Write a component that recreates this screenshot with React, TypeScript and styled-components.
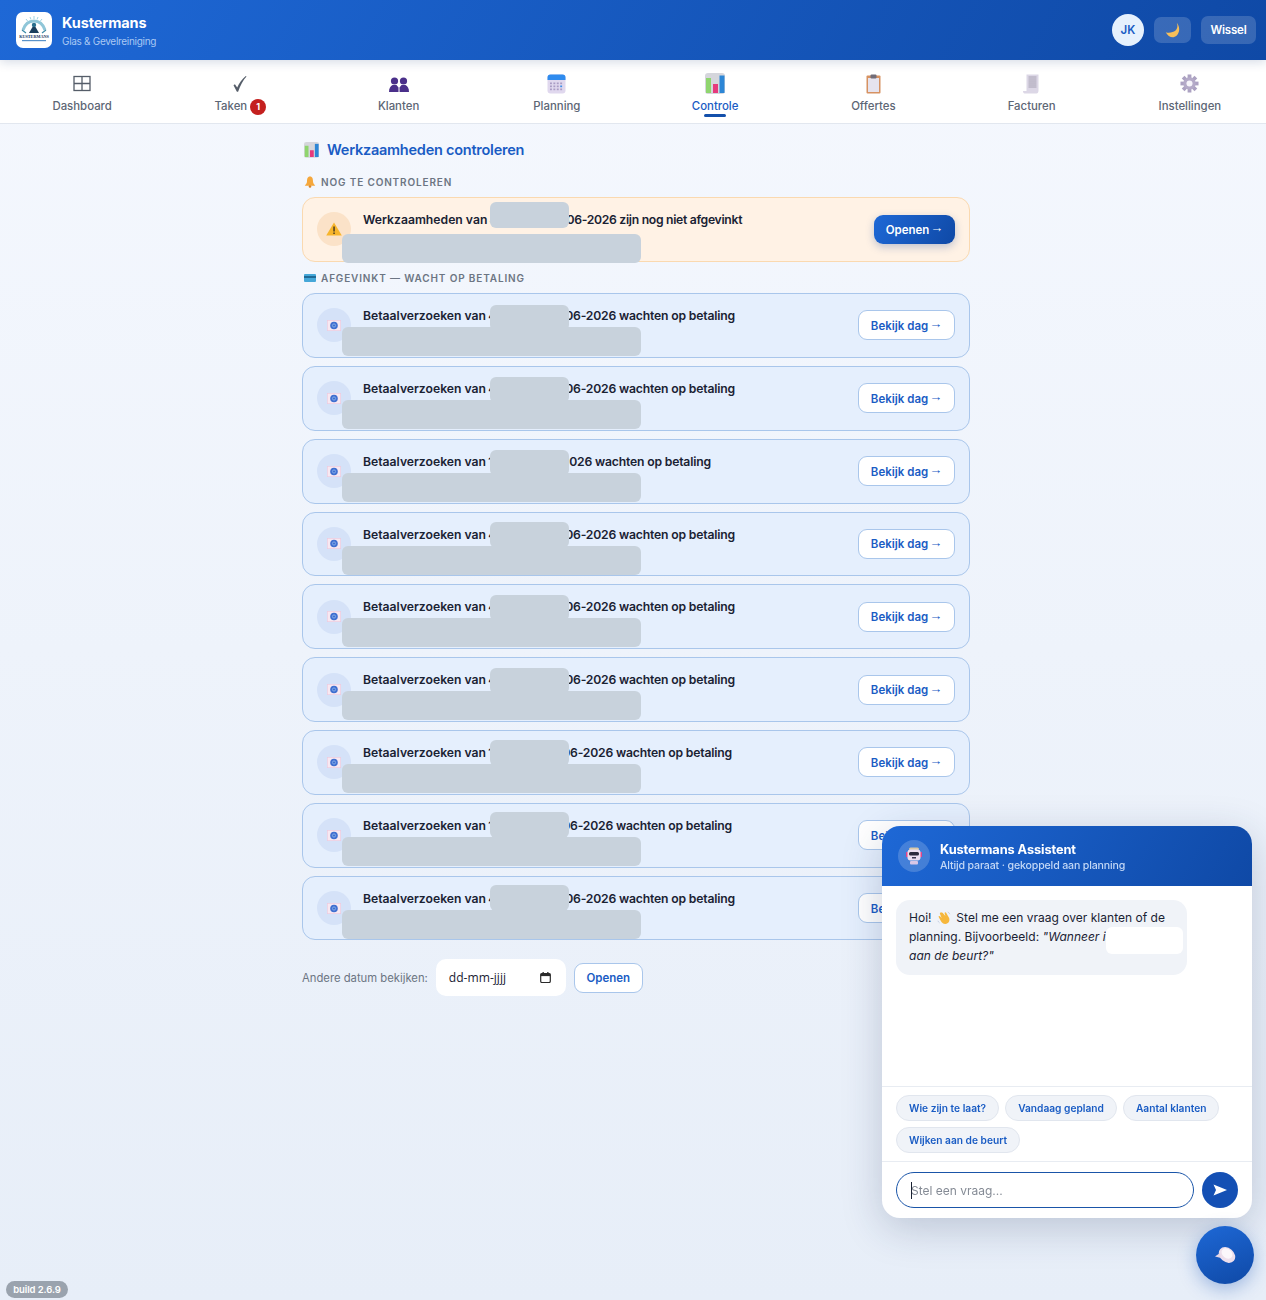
import React from "react";
import styled, {createGlobalStyle} from "styled-components";

const GlobalStyle = createGlobalStyle`
  html, body {
    margin: 0;
    padding: 0;
    min-height: 100%;
  }
  body {
    font-family: Inter, "Noto Sans", "Liberation Sans", sans-serif;
    color: #1a2233;
  }
  * {
    box-sizing: border-box;
  }
`;

const Page = styled.div`
  min-height: 1300px;
  background: linear-gradient(180deg, #f5f8fe 0%, #e7eef8 100%);
`;

const Topbar = styled.header`
  height: 60px;
  padding: 0 10px 0 16px;
  display: flex;
  align-items: center;
  justify-content: space-between;
  background: linear-gradient(120deg, #1e68d6 0%, #0f49a6 100%);
  position: relative;
  z-index: 2;
  box-shadow: 0 2px 10px rgba(15, 50, 110, 0.18);
`;

const Brand = styled.div`
  display: flex;
  align-items: center;
  gap: 10px;
`;

const LogoBox = styled.div`
  width: 36px;
  height: 36px;
  background: #ffffff;
  border-radius: 7px;
  display: flex;
  align-items: center;
  justify-content: center;
`;

const BrandText = styled.div`
  display: flex;
  flex-direction: column;
  padding-top: 1px;
`;

const BrandName = styled.div`
  color: #ffffff;
  font-size: 14.5px;
  font-weight: 700;
  letter-spacing: -0.12px;
  line-height: 19px;
`;

const BrandSub = styled.div`
  color: #a9c8f3;
  font-size: 10px;
  letter-spacing: -0.3px;
  line-height: 15px;
  margin-top: 2px;
`;

const TopActions = styled.div`
  display: flex;
  align-items: center;
  gap: 10px;
`;

const Avatar = styled.div`
  width: 32px;
  height: 32px;
  border-radius: 50%;
  background: #e6f1fd;
  color: #1a5cc4;
  font-size: 11.5px;
  font-weight: 600;
  display: flex;
  align-items: center;
  justify-content: center;
`;

const GhostButton = styled.div<{$wide?: boolean}>`
  height: ${(p) => (p.$wide ? 28 : 26)}px;
  width: ${(p) => (p.$wide ? 55 : 37)}px;
  border-radius: 7px;
  background: rgba(255, 255, 255, 0.17);
  color: #ffffff;
  font-size: 11.5px;
  font-weight: 600;
  letter-spacing: -0.2px;
  display: flex;
  align-items: center;
  justify-content: center;
`;

const Nav = styled.nav`
  height: 64px;
  background: #ffffff;
  border-bottom: 1px solid #e2e7ef;
  display: grid;
  grid-template-columns: repeat(8, 158.25px);
  padding-left: 3px;
  overflow: hidden;
`;

const NavItem = styled.div<{$active?: boolean}>`
  position: relative;
  display: flex;
  flex-direction: column;
  align-items: center;
  padding-top: 12px;
  color: ${(p) => (p.$active ? "#1a5cc4" : "#5d6675")};
  font-size: 11.4px;
  font-weight: 500;
`;

const NavIcon = styled.div`
  height: 23px;
  display: flex;
  align-items: center;
  justify-content: center;
`;

const NavLabel = styled.div`
  margin-top: 3px;
  line-height: 16px;
  display: flex;
  align-items: center;
  gap: 3px;
`;

const NavMarker = styled.div`
  position: absolute;
  bottom: 6px;
  left: 50%;
  width: 22px;
  height: 3px;
  margin-left: -11px;
  border-radius: 2px;
  background: #1450ab;
`;

const Badge = styled.span`
  width: 16px;
  height: 16px;
  border-radius: 50%;
  background: #c4201f;
  color: #ffffff;
  font-size: 9px;
  font-weight: 700;
  display: flex;
  align-items: center;
  justify-content: center;
  position: relative;
  top: 1px;
`;

const Main = styled.main`
  width: 668px;
  margin-left: 302px;
  padding-top: 16px;
`;

const Title = styled.h1`
  margin: 0;
  display: flex;
  align-items: center;
  gap: 8px;
  font-size: 14.5px;
  line-height: 20px;
  font-weight: 600;
  letter-spacing: -0.24px;
  color: #1a5cc4;
  padding-left: 2px;
`;

const SectionLabel = styled.div<{$top: number}>`
  display: flex;
  align-items: center;
  gap: 5px;
  font-size: 10px;
  font-weight: 600;
  letter-spacing: 0.85px;
  color: #6c7583;
  line-height: 14px;
  margin-top: ${(p) => p.$top}px;
  margin-bottom: 8px;
  padding-left: 2px;
`;

const Cards = styled.div`
  display: flex;
  flex-direction: column;
  gap: 8px;
`;

const Card = styled.div<{$warn?: boolean}>`
  position: relative;
  height: 64.83px;
  border-radius: 13px;
  border: 1px solid ${(p) => (p.$warn ? "#fad9b0" : "#a9c6eb")};
  background: ${(p) => (p.$warn ? "#fff2e5" : "#e5effd")};
  display: flex;
  align-items: center;
  padding: 0 14px;
  gap: 12px;
`;

const RoundIcon = styled.div<{$warn?: boolean}>`
  width: 34px;
  height: 34px;
  flex: none;
  border-radius: 50%;
  background: ${(p) => (p.$warn ? "#fbe2c8" : "#d5e2f8")};
  display: flex;
  align-items: center;
  justify-content: center;
`;

const CardBody = styled.div`
  flex: 1;
  align-self: flex-start;
  padding-top: 12px;
`;

const CardTitle = styled.div`
  font-size: 12.2px;
  line-height: 20px;
  font-weight: 600;
  color: #1a2233;
  white-space: nowrap;
`;

const DateCut = styled.span<{$w: number}>`
  display: inline-block;
  width: ${(p) => p.$w}px;
  margin-left: -1px;
  overflow: hidden;
  vertical-align: bottom;
`;

const CardTail = styled.span<{$tight: number}>`
  letter-spacing: ${(p) => p.$tight}px;
`;

const Mask = styled.div<{$top: number; $left: number; $w: number; $h: number}>`
  position: absolute;
  top: ${(p) => p.$top}px;
  left: ${(p) => p.$left}px;
  width: ${(p) => p.$w}px;
  height: ${(p) => p.$h}px;
  background: #c8d2dc;
  border-radius: 6px;
`;

const Arrow = styled.span`
  font-family: "Liberation Sans", sans-serif;
  font-weight: 400;
  font-size: 13px;
  line-height: 1;
  position: relative;
  top: -2px;
`;

const SolidButton = styled.div`
  height: 29px;
  width: 81px;
  padding-top: 1px;
  border-radius: 9px;
  background: linear-gradient(120deg, #1e68d6 0%, #0f49a6 100%);
  color: #ffffff;
  font-size: 11.5px;
  font-weight: 600;
  line-height: 14px;
  display: flex;
  align-items: center;
  justify-content: center;
  gap: 1px;
  box-shadow: 0 3px 8px rgba(20, 70, 150, 0.28);
`;

const OutlineButton = styled.div<{$w: number}>`
  height: 30px;
  width: ${(p) => p.$w}px;
  flex: none;
  padding-top: 1px;
  border-radius: 9px;
  background: #ffffff;
  border: 1px solid #a9c6eb;
  color: #1a5cc4;
  font-size: 11.5px;
  font-weight: 600;
  line-height: 14px;
  display: flex;
  align-items: center;
  justify-content: center;
  gap: 1px;
`;

const DateRow = styled.div`
  display: flex;
  align-items: center;
  gap: 8px;
  margin-top: 19px;
  font-size: 11.27px;
  color: #6c7583;
`;

const DateField = styled.div`
  width: 130px;
  height: 37px;
  border-radius: 10px;
  background: #ffffff;
  padding: 0 15px 0 13px;
  display: flex;
  align-items: center;
  justify-content: space-between;
  color: #1a2233;
  font-family: "Open Sans", sans-serif;
  font-size: 12.1px;
`;

const ChatPanel = styled.section`
  position: fixed;
  right: 14px;
  bottom: 82px;
  width: 370px;
  height: 392px;
  background: #ffffff;
  border-radius: 18px;
  overflow: hidden;
  box-shadow: 0 10px 40px rgba(30, 50, 90, 0.22);
  display: flex;
  flex-direction: column;
  z-index: 5;
`;

const ChatHeader = styled.div`
  height: 60px;
  flex: none;
  background: linear-gradient(120deg, #1e68d6 0%, #0f49a6 100%);
  display: flex;
  align-items: center;
  gap: 10px;
  padding: 0 16px;
`;

const ChatAvatar = styled.div`
  width: 32px;
  height: 32px;
  border-radius: 50%;
  background: rgba(255, 255, 255, 0.18);
  display: flex;
  align-items: center;
  justify-content: center;
`;

const ChatHeading = styled.div`
  padding-top: 2px;
`;

const ChatName = styled.div`
  color: #ffffff;
  font-size: 12.8px;
  font-weight: 700;
  letter-spacing: -0.1px;
  line-height: 16px;
`;

const ChatStatus = styled.div`
  color: #c3d8f6;
  font-size: 10.6px;
  font-weight: 500;
  letter-spacing: -0.15px;
  line-height: 15px;
`;

const ChatMessages = styled.div`
  flex: 1;
  padding: 14px;
`;

const Bubble = styled.div`
  position: relative;
  width: 291px;
  height: 75px;
  border-radius: 14px;
  background: #f0f3f8;
  padding: 8px 13px;
  font-size: 12px;
  line-height: 19px;
  letter-spacing: 0.02px;
  color: #1a2233;

  em {
    font-style: italic;
  }
`;

const BubbleMask = styled.div`
  position: absolute;
  top: 27px;
  left: 210px;
  width: 77px;
  height: 27px;
  background: #ffffff;
  border-radius: 6px;
`;

const Wave = styled.svg`
  vertical-align: -3px;
  margin: 0 2px;
`;

const Chips = styled.div`
  border-top: 1px solid #e8ecf2;
  padding: 8px 14px 8px;
  display: flex;
  flex-wrap: wrap;
  gap: 6px;
`;

const Chip = styled.div`
  height: 26px;
  border-radius: 13px;
  background: #f0f3f8;
  border: 1px solid #e1e6ee;
  color: #1a5cc4;
  font-size: 10.2px;
  font-weight: 600;
  padding: 0 12px;
  display: flex;
  align-items: center;
`;

const InputRow = styled.div`
  border-top: 1px solid #e8ecf2;
  padding: 10px 14px;
  display: flex;
  align-items: center;
  gap: 8px;
`;

const ChatInput = styled.div`
  position: relative;
  flex: 1;
  height: 36px;
  border-radius: 18px;
  border: 1.3px solid #1a55a8;
  padding-left: 14px;
  display: flex;
  align-items: center;
  color: #858b95;
  font-size: 12px;
`;

const Caret = styled.div`
  position: absolute;
  left: 14px;
  top: 9px;
  width: 1px;
  height: 17px;
  background: #1a2233;
`;

const SendButton = styled.div`
  width: 36px;
  height: 36px;
  border-radius: 50%;
  background: #1450b4;
  display: flex;
  align-items: center;
  justify-content: center;
`;

const Fab = styled.div`
  position: fixed;
  right: 12px;
  bottom: 16px;
  width: 58px;
  height: 58px;
  border-radius: 50%;
  background: linear-gradient(160deg, #1e68d6 0%, #0f49a6 100%);
  box-shadow: 0 5px 18px rgba(20, 80, 180, 0.35);
  display: flex;
  align-items: center;
  justify-content: center;
  z-index: 6;
`;

const BuildTag = styled.div`
  position: fixed;
  left: 6px;
  bottom: 2px;
  height: 17px;
  width: 62px;
  border-radius: 9px;
  background: #9aa3ae;
  color: #ffffff;
  font-size: 9.5px;
  font-weight: 600;
  letter-spacing: -0.1px;
  display: flex;
  align-items: center;
  justify-content: center;
`;

function Logo() {
    return (
        <svg width="34" height="34" viewBox="0 0 34 34">
            <path d="M6 17C8 11 12 8 17 8s9 3 11 9" fill="none" stroke="#8fc6d8" strokeWidth="3"/>
            <path d="M9 6l2 2.500M17 3v3M25 6l-2 2.500M13 4l1 2.500M21 4l-1 2.500" stroke="#9fd3e2" strokeWidth="1"/>
            <circle cx="17" cy="12" r="2.200" fill="#2a6f8e"/>
            <path d="M12 20l3.500-6h3L22 20z" fill="#1c3f5e"/>
            <path d="M5 17l4 3M29 17l-4 3" stroke="#3d8aa6" strokeWidth="1.200"/>
            <text x="17" y="25" textAnchor="middle" fontFamily="Liberation Serif, serif" fontWeight="700"
                  fontSize="4.200" fill="#14305c">KUSTERMANS</text>
            <rect x="5" y="27" width="24" height="1.200" fill="#5b93c9"/>
        </svg>
    );
}

function GridIcon() {
    return (
        <svg width="18" height="17" viewBox="0 0 18 17" fill="none" stroke="#555d69" strokeWidth="1.300">
            <rect x="1" y="1.500" width="16" height="14"/>
            <path d="M9 1.500v14M1 8.500h16"/>
        </svg>
    );
}

function CheckIcon() {
    return (
        <svg width="16" height="18" viewBox="0 0 16 18" fill="#555d69">
            <path d="M1.500 10.200l1.400-1 2.300 3.400C7.200 8 10 4 13.800 1l.7.600C11 5.400 8.300 10.600 6.100 16.800H4.900z"/>
        </svg>
    );
}

function PeopleIcon() {
    return (
        <svg width="20" height="19" viewBox="0 0 20 19" fill="#4a2f8a">
            <circle cx="5.500" cy="7" r="3.600"/>
            <circle cx="14.500" cy="7" r="3.600"/>
            <path d="M0 18c0-4 1.500-6 3.500-7h4l2 2.500L9.500 18z"/>
            <path d="M20 18c0-4-1.500-6-3.500-7h-4l-2 2.500.1 4.500z"/>
        </svg>
    );
}

function CalendarIcon() {
    const dots = [];
    for (let r = 0; r < 3; r++) {
        for (let c = 0; c < 4; c++) {
            dots.push(<rect key={`${r}-${c}`} x={3 + c * 3.4} y={8.5 + r * 3} width="1.900" height="1.700"
                            fill={r === 1 && c === 3 ? "#3e8ee8" : "#a99cc4"}/>);
        }
    }
    return (
        <svg width="19" height="20" viewBox="0 0 19 20">
            <rect x="0.500" y="0.500" width="18" height="19" rx="3" fill="#e0d8ee"/>
            <path d="M.5 6V3.500a3 3 0 0 1 3-3h12a3 3 0 0 1 3 3V6z" fill="#2f8bee"/>
            {dots}
        </svg>
    );
}

function ChartIcon({size = 20}: {size?: number}) {
    return (
        <svg width={size} height={size * 1.05} viewBox="0 0 20 21">
            <rect width="20" height="21" rx="3" fill="#d5d6dc"/>
            <rect x="1" y="5" width="5" height="15" fill="#8fd56e"/>
            <rect x="8" y="11" width="5" height="9" fill="#e6397c"/>
            <rect x="14.500" y="2.500" width="5" height="17.500" fill="#2c86d6"/>
        </svg>
    );
}

function ClipboardIcon() {
    return (
        <svg width="15" height="20" viewBox="0 0 15 20">
            <rect x="0.500" y="1.500" width="14" height="18" rx="1" fill="#d69262"/>
            <rect x="2" y="4" width="11" height="14" fill="#e6e3ee"/>
            <rect x="4.500" y="0.500" width="6" height="4" rx="1" fill="#706c78"/>
        </svg>
    );
}

function ReceiptIcon() {
    return (
        <svg width="17" height="20" viewBox="0 0 17 20">
            <path d="M3.500 0.500h12V16.500c0 1.800-.8 3-2 3H1.500c-.8 0-1.500-1-1.500-2.500h3.500z" fill="#dcd7e6"/>
            <path d="M5.500 3h8M5.500 5h8M5.500 7h8M5.500 9h8M5.500 11h8M5.500 13h8" stroke="#9a95a6" strokeWidth="0.800"/>
        </svg>
    );
}

function GearIcon() {
    const teeth = [0, 45, 90, 135, 180, 225, 270, 315];
    return (
        <svg width="19" height="19" viewBox="0 0 20 20">
            {teeth.map((a) => (
                <rect key={a} x="8" y="0.500" width="4" height="5" fill="#aca2c2" transform={`rotate(${a} 10 10)`}/>
            ))}
            <circle cx="10" cy="10" r="6.500" fill="#b4aac8"/>
            <circle cx="10" cy="10" r="3.200" fill="#f6f4fa"/>
        </svg>
    );
}

function MoonIcon() {
    return (
        <svg width="16" height="16" viewBox="0 0 15 15">
            <path d="M11 .8c1.900 4.300-.4 9-7.500 9.200-1 0-2-.2-2.800-.5C2.300 12.600 5 14.500 8 14.200 12.800 13.700 15.500 6 11 .8z" fill="#f6bf5a"/>
        </svg>
    );
}

function BellIcon() {
    return (
        <svg width="12" height="12" viewBox="0 0 12 12">
            <path d="M6 .5C3.500.5 3 3 3 5.500 3 7.500 1.500 8.500.8 9.800h10.400C10.500 8.500 9 7.500 9 5.500 9 3 8.500.5 6 .5z" fill="#f5a73b"/>
            <circle cx="6" cy="10.500" r="1.300" fill="#d8862a"/>
        </svg>
    );
}

function CardIcon() {
    return (
        <svg width="12" height="10" viewBox="0 0 12 10">
            <rect y="1" width="12" height="8" rx="1" fill="#45a7d8"/>
            <rect y="3" width="12" height="2" fill="#1f6a96"/>
        </svg>
    );
}

function WarnIcon() {
    return (
        <svg width="16" height="14" viewBox="0 0 16 14">
            <path d="M8 .5L15.800 13.500H.2z" fill="#f7b52c"/>
            <rect x="7.300" y="4.500" width="1.500" height="5" fill="#4a3a20"/>
            <rect x="7.300" y="10.500" width="1.500" height="1.500" fill="#4a3a20"/>
        </svg>
    );
}

function MoneyIcon() {
    return (
        <svg width="14" height="11" viewBox="0 0 14 11">
            <rect x="0.300" y="0.300" width="13.400" height="10.400" fill="#f8e8f1" stroke="#efc8dd" strokeWidth="0.600"/>
            <circle cx="7" cy="5.500" r="3.800" fill="#3f6fd0"/>
            <circle cx="7" cy="5.500" r="1.600" fill="none" stroke="#9cc0f0" strokeWidth="0.700"/>
        </svg>
    );
}

function RobotIcon() {
    return (
        <svg width="18" height="18" viewBox="0 0 18 18">
            <rect x="4" y="0.500" width="10" height="3" rx="1.500" fill="#d9c9a8"/>
            <rect x="1" y="5" width="2" height="5" fill="#e0468c"/>
            <rect x="15" y="5" width="2" height="5" fill="#e0468c"/>
            <rect x="2.500" y="2.500" width="13" height="11" rx="3" fill="#ecdff0"/>
            <rect x="4" y="5" width="10" height="3.500" rx="1.500" fill="#2c2a3c"/>
            <rect x="7" y="10" width="4" height="1.500" fill="#3d3850"/>
            <rect x="5" y="14" width="8" height="3.500" rx="1" fill="#d9c7e6"/>
        </svg>
    );
}

function WaveIcon() {
    return (
        <Wave width="14" height="15" viewBox="0 0 15 15">
            <path d="M4 2l2 .5 3 3.500-1-3.500 1.500-.5 3.500 6c1 3-.5 6-4 6.500-2.500 0-4-1.500-5-3.500L1.500 6.500 3 5.800 5 8 3 3.300z" fill="#f6b73c"/>
            <path d="M11.500 1.500c1 .5 1.800 1.300 2.300 2.500M1 11c.3 1 .9 1.800 1.800 2.300" stroke="#b9c6dc" strokeWidth="0.800" fill="none"/>
        </Wave>
    );
}

function CalendarGlyph() {
    return (
        <svg width="11" height="11" viewBox="0 0 11 11">
            <rect x="0.700" y="1.500" width="9.600" height="9" rx="1.300" fill="none" stroke="#2a2a2a" strokeWidth="1.200"/>
            <rect x="0.700" y="1.500" width="9.600" height="2.600" fill="#2a2a2a"/>
            <rect x="2.500" y="0" width="1.300" height="2" fill="#2a2a2a"/>
            <rect x="7.200" y="0" width="1.300" height="2" fill="#2a2a2a"/>
        </svg>
    );
}

function SendIcon() {
    return (
        <svg width="14" height="12" viewBox="0 0 14 12">
            <path d="M0.500 0.500L14 6 .5 11.500 3 6z" fill="#ffffff"/>
        </svg>
    );
}

function ChatBlob() {
    return (
        <svg width="22" height="20" viewBox="0 0 22 20">
            <ellipse cx="13" cy="10" rx="9" ry="7" transform="rotate(40 13 10)" fill="#eddfec"/>
            <ellipse cx="13" cy="8.500" rx="6" ry="4.500" transform="rotate(40 13 8.500)" fill="#fbf7fb"/>
            <path d="M6 8L1 11.500 7 13z" fill="#e6d6e6"/>
        </svg>
    );
}

const navItems: Array<{label: string, icon: React.ReactNode, active?: boolean, badge?: string}> = [
    {label: "Dashboard", icon: <GridIcon/>},
    {label: "Taken", icon: <CheckIcon/>, badge: "1"},
    {label: "Klanten", icon: <PeopleIcon/>},
    {label: "Planning", icon: <CalendarIcon/>},
    {label: "Controle", icon: <ChartIcon/>, active: true},
    {label: "Offertes", icon: <ClipboardIcon/>},
    {label: "Facturen", icon: <ReceiptIcon/>},
    {label: "Instellingen", icon: <GearIcon/>},
];

// top = start of the upper grey block inside each card, the tail is what stays readable after it
const paymentRows = [
    {day: "4", gap: 77, tail: "06-2026", top: 11},
    {day: "4", gap: 77, tail: "06-2026", top: 10},
    {day: "1", gap: 81, tail: "026", top: 10},
    {day: "4", gap: 77, tail: "06-2026", top: 9},
    {day: "4", gap: 77, tail: "06-2026", top: 10},
    {day: "4", gap: 77, tail: "06-2026", top: 10},
    {day: "1", gap: 74, tail: "06-2026", top: 9},
    {day: "1", gap: 74, tail: "06-2026", top: 8},
    {day: "4", gap: 77, tail: "06-2026", top: 8},
];

export default function App() {
    return (
        <Page>
            <GlobalStyle/>
            <Topbar>
                <Brand>
                    <LogoBox><Logo/></LogoBox>
                    <BrandText>
                        <BrandName>Kustermans</BrandName>
                        <BrandSub>Glas &amp; Gevelreiniging</BrandSub>
                    </BrandText>
                </Brand>
                <TopActions>
                    <Avatar>JK</Avatar>
                    <GhostButton><MoonIcon/></GhostButton>
                    <GhostButton $wide>Wissel</GhostButton>
                </TopActions>
            </Topbar>
            <Nav>
                {navItems.map((item) => (
                    <NavItem key={item.label} $active={item.active}>
                        <NavIcon>{item.icon}</NavIcon>
                        <NavLabel>
                            {item.label}
                            {item.badge && <Badge>{item.badge}</Badge>}
                        </NavLabel>
                        {item.active && <NavMarker/>}
                    </NavItem>
                ))}
            </Nav>
            <Main>
                <Title><ChartIcon size={15}/>Werkzaamheden controleren</Title>
                <SectionLabel $top={15}><BellIcon/>NOG TE CONTROLEREN</SectionLabel>
                <Card $warn>
                    <RoundIcon $warn><WarnIcon/></RoundIcon>
                    <CardBody>
                        <CardTitle>
                            Werkzaamheden van <DateCut $w={77}>4</DateCut><CardTail $tight={-0.3}>06-2026 zijn nog niet afgevinkt</CardTail>
                        </CardTitle>
                    </CardBody>
                    <SolidButton>Openen <Arrow>→</Arrow></SolidButton>
                    <Mask $top={4} $left={187} $w={79} $h={26}/>
                    <Mask $top={36} $left={39} $w={299} $h={29}/>
                </Card>
                <SectionLabel $top={9.2}><CardIcon/>AFGEVINKT — WACHT OP BETALING</SectionLabel>
                <Cards>
                    {paymentRows.map((row, i) => (
                        <Card key={i}>
                            <RoundIcon><MoneyIcon/></RoundIcon>
                            <CardBody>
                                <CardTitle>
                                    Betaalverzoeken van <DateCut $w={row.gap}>{row.day}</DateCut><CardTail $tight={-0.18}>{row.tail} wachten op betaling</CardTail>
                                </CardTitle>
                            </CardBody>
                            <OutlineButton $w={97}>Bekijk dag <Arrow>→</Arrow></OutlineButton>
                            <Mask $top={row.top} $left={187} $w={79} $h={26}/>
                            <Mask $top={33} $left={39} $w={299} $h={29}/>
                        </Card>
                    ))}
                </Cards>
                <DateRow>
                    Andere datum bekijken:
                    <DateField>dd-mm-jjjj<CalendarGlyph/></DateField>
                    <OutlineButton $w={69}>Openen</OutlineButton>
                </DateRow>
            </Main>
            <ChatPanel>
                <ChatHeader>
                    <ChatAvatar><RobotIcon/></ChatAvatar>
                    <ChatHeading>
                        <ChatName>Kustermans Assistent</ChatName>
                        <ChatStatus>Altijd paraat · gekoppeld aan planning</ChatStatus>
                    </ChatHeading>
                </ChatHeader>
                <ChatMessages>
                    <Bubble>
                        Hoi! <WaveIcon/> Stel me een vraag over klanten of de planning. Bijvoorbeeld: <em>"Wanneer is de wijk aan de beurt?"</em>
                        <BubbleMask/>
                    </Bubble>
                </ChatMessages>
                <Chips>
                    <Chip>Wie zijn te laat?</Chip>
                    <Chip>Vandaag gepland</Chip>
                    <Chip>Aantal klanten</Chip>
                    <Chip>Wijken aan de beurt</Chip>
                </Chips>
                <InputRow>
                    <ChatInput><Caret/>Stel een vraag...</ChatInput>
                    <SendButton><SendIcon/></SendButton>
                </InputRow>
            </ChatPanel>
            <Fab><ChatBlob/></Fab>
            <BuildTag>build 2.6.9</BuildTag>
        </Page>
    );
}
